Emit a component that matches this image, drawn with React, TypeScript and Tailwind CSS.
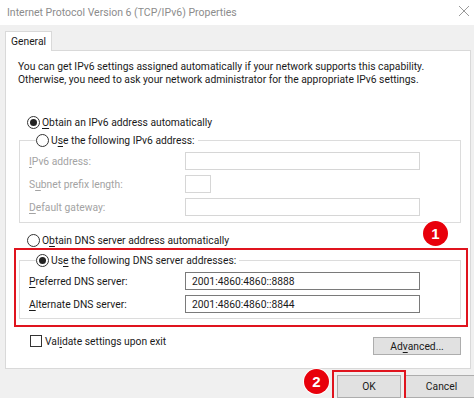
import React from "react";

const FONT = "font-['Roboto','Noto_Sans',sans-serif]";

function U({ children }: { children: React.ReactNode }) {
  return <span className="underline underline-offset-[2px]">{children}</span>;
}

function Radio({ checked }: { checked?: boolean }) {
  return (
    <span className="w-[13px] h-[13px] rounded-full border border-[#333] bg-white flex items-center justify-center shrink-0">
      {checked && <span className="w-[7px] h-[7px] rounded-full bg-[#222]" />}
    </span>
  );
}

function Badge({ n, className }: { n: string; className: string }) {
  return (
    <div
      className={
        "absolute w-[25px] h-[25px] rounded-full bg-[#e8000b] text-white text-[15px] font-bold flex items-center justify-center shadow-[0_0_0_1px_rgba(255,255,255,0.9)] font-['Liberation_Sans',sans-serif] " +
        className
      }
    >
      {n}
    </div>
  );
}

function Field({
  label,
  value,
  disabled,
  small,
}: {
  label: React.ReactNode;
  value?: string;
  disabled?: boolean;
  small?: boolean;
}) {
  return (
    <div className="flex items-center h-[18px]">
      <span className={"w-[156px] " + (disabled ? "text-[#a3a3a3]" : "text-[#1a1a1a]")}>{label}</span>
      <div
        className={
          "h-[18px] bg-white border flex items-center px-[6px] " +
          (small ? "w-[26px] h-[17px] " : "w-[235px] ") +
          (disabled ? "border-[#d6d6d6]" : "border-[#7a7a7a]")
        }
      >
        {value}
      </div>
    </div>
  );
}

export default function App() {
  return (
    <div className={"relative w-[474px] h-[398px] bg-[#f0f0f0] overflow-hidden text-[10.3px] leading-[13px] text-[#1a1a1a] " + FONT}>
      {/* title bar */}
      <div className="h-[25px] bg-white flex items-center justify-between pl-[7px] pr-[4px]">
        <span className="text-[10.5px] text-[#8c8c8c]">Internet Protocol Version 6 (TCP/IPv6) Properties</span>
        <svg width="12" height="12" viewBox="0 0 12 12" className="mt-[-3px]">
          <path d="M1 1L11 11M11 1L1 11" stroke="#9a9a9a" strokeWidth="1" />
        </svg>
      </div>

      <div className="pl-[5px] pt-[6px]">
        {/* tab */}
        <div className="relative z-10 w-[47px] h-[20px] bg-white border border-b-0 border-[#d9d9d9] flex items-center justify-center -mb-px">
          General
        </div>

        {/* panel */}
        <div className="w-[466px] h-[319px] bg-white border border-[#d9d9d9] flex flex-col">
          <p className="pl-[12px] pt-[9px] leading-[13px]">
            You can get IPv6 settings assigned automatically if your network supports this capability.
            <br />
            Otherwise, you need to ask your network administrator for the appropriate IPv6 settings.
          </p>

          <div className="flex items-center gap-[2px] h-[14px] mt-[29px] ml-[21px]">
            <Radio checked />
            <span>
              <U>O</U>btain an IPv6 address automatically
            </span>
          </div>

          <fieldset className="ml-[13px] mt-[4px] w-[442px] border border-[#dcdcdc] pl-[9px] pb-[6px] flex flex-col gap-[5px]">
            <legend className="ml-[7px] pr-[3px] flex items-center gap-[2px] h-[14px] bg-white">
              <Radio />
              <span>
                U<U>s</U>e the following IPv6 address:
              </span>
            </legend>
            <div className="h-0" />
            <Field disabled label={<><U>I</U>Pv6 address:</>} />
            <Field disabled small label={<>S<U>u</U>bnet prefix length:</>} />
            <Field disabled label={<><U>D</U>efault gateway:</>} />
          </fieldset>

          <div className="flex items-center gap-[2px] h-[14px] mt-[10px] ml-[21px]">
            <Radio />
            <span>
              O<U>b</U>tain DNS server address automatically
            </span>
          </div>

          {/* highlighted DNS section */}
          <div className="ml-[8px] mt-[1px] w-[454px] border-2 border-[#e0141e] pt-[3px] pb-[6px] pl-[3px]">
            <fieldset className="w-[442px] border border-[#dcdcdc] pl-[9px] pb-[5px] flex flex-col gap-[5px]">
              <legend className="ml-[7px] pr-[3px] flex items-center gap-[2px] h-[14px] bg-white">
                <Radio checked />
                <span>
                  Us<U>e</U> the following DNS server addresses:
                </span>
              </legend>
              <div className="h-0" />
              <Field label={<><U>P</U>referred DNS server:</>} value="2001:4860:4860::8888" />
              <Field label={<><U>A</U>lternate DNS server:</>} value="2001:4860:4860::8844" />
            </fieldset>
          </div>

          <div className="flex items-start justify-between mt-[7px] pl-[24px] pr-[9px]">
            <div className="flex items-center gap-[3px] h-[14px]">
              <span className="w-[12px] h-[12px] border border-[#333] bg-white" />
              <span>
                Val<U>i</U>date settings upon exit
              </span>
            </div>
            <button className="mt-[3px] w-[88px] h-[18px] bg-[#e1e1e1] border border-[#adadad] flex items-center justify-center">
              Ad<U>v</U>anced...
            </button>
          </div>
        </div>
      </div>

      {/* bottom buttons */}
      <div className="flex gap-[3px] pl-[337px] pt-[6px]">
        <div className="relative">
          <button className="w-[64px] h-[23px] bg-[#e1e1e1] border border-[#adadad] flex items-center justify-center">
            OK
          </button>
          <div className="absolute -left-[5px] -top-[5px] w-[74px] h-[33px] border-2 border-[#e0141e]" />
        </div>
        <button className="w-[75px] h-[23px] shrink-0 bg-[#e1e1e1] border border-[#adadad] flex items-center justify-center">
          Cancel
        </button>
      </div>

      <Badge n="1" className="left-[423px] top-[221px]" />
      <Badge n="2" className="left-[304px] top-[369px]" />
    </div>
  );
}
